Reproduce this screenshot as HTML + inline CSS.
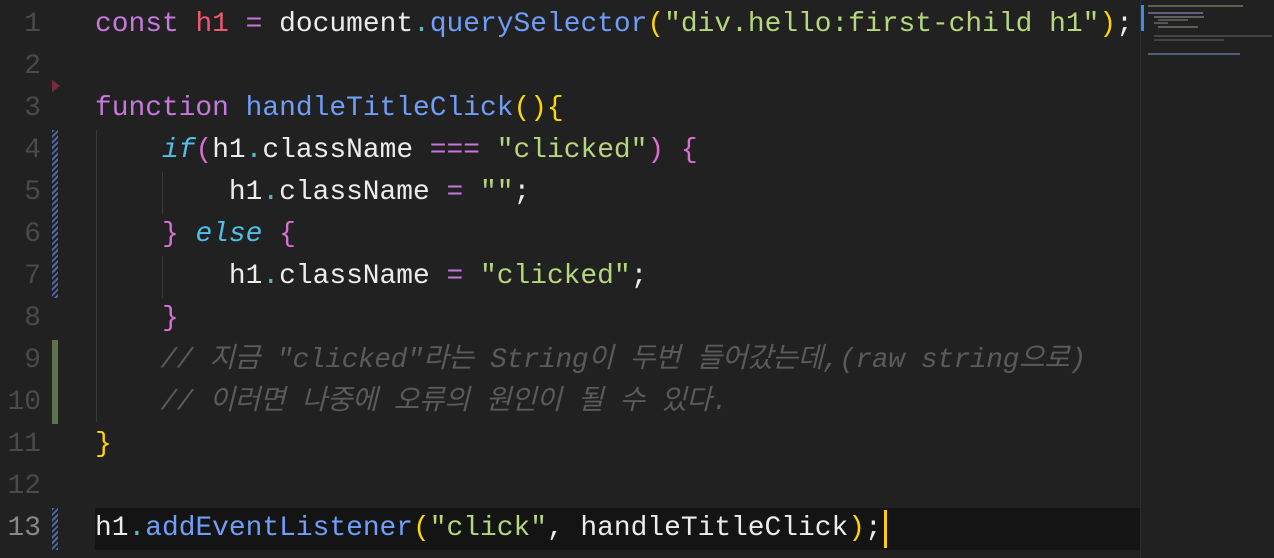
<!DOCTYPE html>
<html><head><meta charset="utf-8"><style>
html,body{margin:0;padding:0;}
body{width:1274px;height:558px;background:#212121;position:relative;overflow:hidden;font-family:"Liberation Mono","Noto Sans CJK KR",monospace;font-size:27.9px;}
.ln{position:absolute;left:0;width:41px;text-align:right;color:#4a4a4a;height:42px;line-height:42px;}
.l{position:absolute;left:95px;height:42px;line-height:42px;white-space:pre;color:#ececec;}
.k{color:#c678dd}.r{color:#ef596f}.f{color:#6f9ef8}.s{color:#b5d67b}.y{color:#ffd700}.p{color:#da70d6}
.d{color:#56b6c2}.i{color:#4fc1e9;font-style:italic}.c{color:#5a5a5a;font-style:italic;letter-spacing:-0.4px}
.cur{position:absolute;left:95px;top:508px;width:1045px;height:42px;background:#141414;}
.g{position:absolute;width:1px;background:#3a3a3a;}
.hat{position:absolute;left:52px;width:6px;background:repeating-linear-gradient(135deg,#5068a8 0 2px,transparent 2px 4px);}
.mm{position:absolute;height:2px;}
</style></head><body>
<div class="cur"></div>
<div class="g" style="left:96px;top:130px;height:292px"></div>
<div class="g" style="left:162px;top:172px;height:42px"></div>
<div class="g" style="left:162px;top:256px;height:42px"></div>
<div class="hat" style="top:130px;height:168px"></div>
<div class="hat" style="top:508px;height:42px"></div>
<div style="position:absolute;left:52px;top:340px;width:6px;height:84px;background:#5f7150"></div>
<div style="position:absolute;left:52px;top:80px;width:0;height:0;border-top:6px solid transparent;border-bottom:6px solid transparent;border-left:8px solid #7a2a38"></div>
<div class="ln" style="top:4px">1</div><div class="ln" style="top:46px">2</div><div class="ln" style="top:88px">3</div>
<div class="ln" style="top:130px">4</div><div class="ln" style="top:172px">5</div><div class="ln" style="top:214px">6</div>
<div class="ln" style="top:256px">7</div><div class="ln" style="top:298px">8</div><div class="ln" style="top:340px">9</div>
<div class="ln" style="top:382px">10</div><div class="ln" style="top:424px">11</div><div class="ln" style="top:466px">12</div>
<div class="ln" style="top:508px;color:#888">13</div>
<div class="l" style="top:4px"><span class="k">const</span> <span class="r">h1</span> <span class="k">=</span> document<span class="d">.</span><span class="f">querySelector</span><span class="y">(</span><span class="s">"div.hello:first-child h1"</span><span class="y">)</span>;</div>
<div class="l" style="top:88px"><span class="k">function</span> <span class="f">handleTitleClick</span><span class="y">(){</span></div>
<div class="l" style="top:130px">    <span class="i">if</span><span class="p">(</span>h1<span class="d">.</span>className <span class="k">===</span> <span class="s">"clicked"</span><span class="p">) {</span></div>
<div class="l" style="top:172px">        h1<span class="d">.</span>className <span class="k">=</span> <span class="s">""</span>;</div>
<div class="l" style="top:214px">    <span class="p">}</span> <span class="i">else</span> <span class="p">{</span></div>
<div class="l" style="top:256px">        h1<span class="d">.</span>className <span class="k">=</span> <span class="s">"clicked"</span>;</div>
<div class="l" style="top:298px">    <span class="p">}</span></div>
<div class="l c" style="top:340px">    // 지금 "clicked"라는 String이 두번 들어갔는데,(raw string으로)</div>
<div class="l c" style="top:382px">    // 이러면 나중에 오류의 원인이 될 수 있다.</div>
<div class="l" style="top:424px"><span class="y">}</span></div>
<div class="l" style="top:508px">h1<span class="d">.</span><span class="f">addEventListener</span><span class="y">(</span><span class="s">"click"</span>, handleTitleClick<span class="y">)</span>;</div>
<div style="position:absolute;left:884px;top:510px;width:3px;height:38px;background:#ffcc00"></div>
<div style="position:absolute;left:1140px;top:0;width:1px;height:558px;background:#2c2c2c"></div>
<div style="position:absolute;left:1141px;top:5px;width:3px;height:26px;background:#3a8ee6"></div>
<div class="mm" style="left:1148px;top:5px;width:95px;background:#5b6050"></div>
<div class="mm" style="left:1148px;top:12px;width:55px;background:#6a5a80"></div>
<div class="mm" style="left:1154px;top:16px;width:50px;background:#606060"></div>
<div class="mm" style="left:1158px;top:19px;width:30px;background:#555"></div>
<div class="mm" style="left:1154px;top:22px;width:14px;background:#555"></div>
<div class="mm" style="left:1158px;top:26px;width:40px;background:#5b6050"></div>
<div class="mm" style="left:1154px;top:35px;width:118px;background:#444"></div>
<div class="mm" style="left:1154px;top:39px;width:70px;background:#444"></div>
<div class="mm" style="left:1148px;top:53px;width:92px;background:#55607a"></div>
</body></html>
